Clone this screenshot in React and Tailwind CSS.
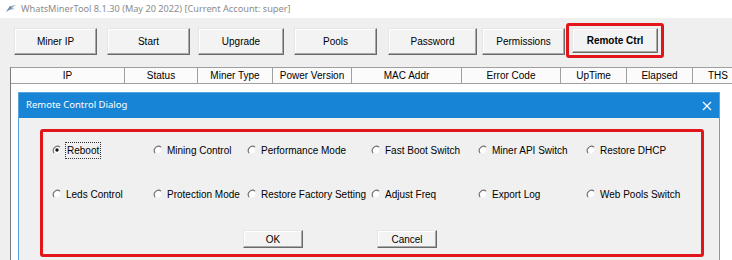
import { clsx } from 'clsx'

const toolbar = [
  { label: 'Miner IP', cls: 'ml-[14px] w-[83px]' },
  { label: 'Start', cls: 'ml-[10px] w-[83px]' },
  { label: 'Upgrade', cls: 'ml-[8px] w-[86px]' },
  { label: 'Pools', cls: 'ml-[10px] w-[83px]' },
  { label: 'Password', cls: 'ml-[11px] w-[89px]' },
  { label: 'Permissions', cls: 'ml-[5px] w-[83px]' },
]

const columns = [
  { label: 'IP', cls: 'w-[114px] justify-center' },
  { label: 'Status', cls: 'w-[73px] justify-center' },
  { label: 'Miner Type', cls: 'w-[75px] justify-center' },
  { label: 'Power Version', cls: 'w-[79px] justify-center' },
  { label: 'MAC Addr', cls: 'w-[110px] justify-center' },
  { label: 'Error Code', cls: 'w-[99px] justify-center' },
  { label: 'UpTime', cls: 'w-[66px] justify-center' },
  { label: 'Elapsed', cls: 'w-[66px] justify-center' },
  { label: 'THS', cls: 'w-[40px] pl-[15px]' },
]

const options = [
  'Reboot',
  'Mining Control',
  'Performance Mode',
  'Fast Boot Switch',
  'Miner API Switch',
  'Restore DHCP',
  'Leds Control',
  'Protection Mode',
  'Restore Factory Setting',
  'Adjust Freq',
  'Export Log',
  'Web Pools Switch',
]

function WinButton({ children, className = '' }) {
  return (
    <button
      type="button"
      className={clsx(
        'flex items-center justify-center border border-t-[#e6e6e6] border-l-[#e6e6e6] border-r-[#6a6a6a] border-b-[#6a6a6a] bg-[#f3f3f3] text-[10px] text-black shadow-[inset_-1px_-1px_0_#a8a8a8,inset_1px_1px_0_#ffffff]',
        className
      )}
    >
      {children}
    </button>
  )
}

function Radio({ checked }) {
  return (
    <svg width="10" height="10" viewBox="0 0 10 10" className="shrink-0">
      <circle cx="5" cy="5" r="4.2" fill="#ffffff" />
      <path d="M2.2 8.1 A4.2 4.2 0 0 1 8.1 2.2" fill="none" stroke="#6c6c6c" strokeWidth="1.1" />
      <path d="M8.1 2.2 A4.2 4.2 0 0 1 2.2 8.1" fill="none" stroke="#ececec" strokeWidth="1" />
      {checked && <circle cx="5" cy="5" r="1.7" fill="#111111" />}
    </svg>
  )
}

function AppIcon() {
  return (
    <svg width="12" height="10" viewBox="0 0 12 10">
      <path d="M1 8 L5 2 L11 1 L7 4 L10 5 L4 6 Z" fill="#9fb4c8" />
      <path d="M1 8 L5 2 L7 4 L4 6 Z" fill="#6f8aa6" />
    </svg>
  )
}

export default function App() {
  return (
    <div className="relative h-[260px] w-[732px] overflow-hidden bg-[#efefef] font-['Liberation_Sans',Arial,sans-serif]">
      {/* window title */}
      <div className="flex h-[18px] items-center gap-[4px] bg-white pl-[5px] font-['Noto_Sans',sans-serif] text-[9.2px] text-[#8c8c8c]">
        <AppIcon />
        <span>WhatsMinerTool 8.1.30 (May 20 2022) [Current Account: super]</span>
      </div>

      {/* toolbar */}
      <div className="flex items-start pt-[10px]">
        {toolbar.map((b) => (
          <WinButton key={b.label} className={clsx('h-[27px]', b.cls)}>
            {b.label}
          </WinButton>
        ))}
        <div className="-mt-[5px] ml-[1px] rounded-[3px] border-[3px] border-[#e2151b] px-[3px] py-[2px]">
          <WinButton className="h-[25px] w-[86px] font-bold">Remote Ctrl</WinButton>
        </div>
      </div>

      {/* miner table */}
      <div className="ml-[10px] mt-[9px] h-[200px] border-l border-t border-l-[#7a7a7a] border-t-[#a0a0a0] bg-white">
        <div className="flex h-[16px] border-b border-[#a0a0a0] bg-[#fbfbfb] text-[10px]">
          {columns.map((c) => (
            <div
              key={c.label}
              className={clsx('flex shrink-0 items-center border-r border-[#a0a0a0]', c.cls)}
            >
              {c.label}
            </div>
          ))}
        </div>
      </div>

      {/* remote control dialog */}
      <div className="absolute left-[18px] top-[92px] w-[702px] border border-[#5aa3dc] bg-[#f0f0f0]">
        <div className="flex h-[25px] items-center justify-between bg-[#1884d6] pl-[7px] pr-[7px] font-['Noto_Sans',sans-serif] text-[9.5px] text-white">
          <span>Remote Control Dialog</span>
          <svg width="10" height="10" viewBox="0 0 10 10">
            <path d="M1 1 L9 9 M9 1 L1 9" stroke="#ffffff" strokeWidth="1.2" />
          </svg>
        </div>
        <div className="pb-[20px] pl-[21px] pt-[11px]">
          <div className="h-[128px] w-[664px] rounded-[3px] border-[3px] border-[#e2151b] pl-[9px] pt-[12px]">
            <div className="grid grid-cols-[101px_94px_124px_107px_108px_1fr] gap-y-[32px] text-[10px]">
              {options.map((o, i) => (
                <div key={o} className="flex h-[12px] items-center gap-[4px] whitespace-nowrap">
                  <Radio checked={i === 0} />
                  <span className={clsx(i === 0 && 'outline outline-1 outline-dotted outline-[#333] px-[1px]')}>{o}</span>
                </div>
              ))}
            </div>
            <div className="mt-[30px] flex">
              <WinButton className="ml-[191px] h-[18px] w-[60px]">OK</WinButton>
              <WinButton className="ml-[74px] h-[18px] w-[60px]">Cancel</WinButton>
            </div>
          </div>
        </div>
      </div>
    </div>
  )
}
